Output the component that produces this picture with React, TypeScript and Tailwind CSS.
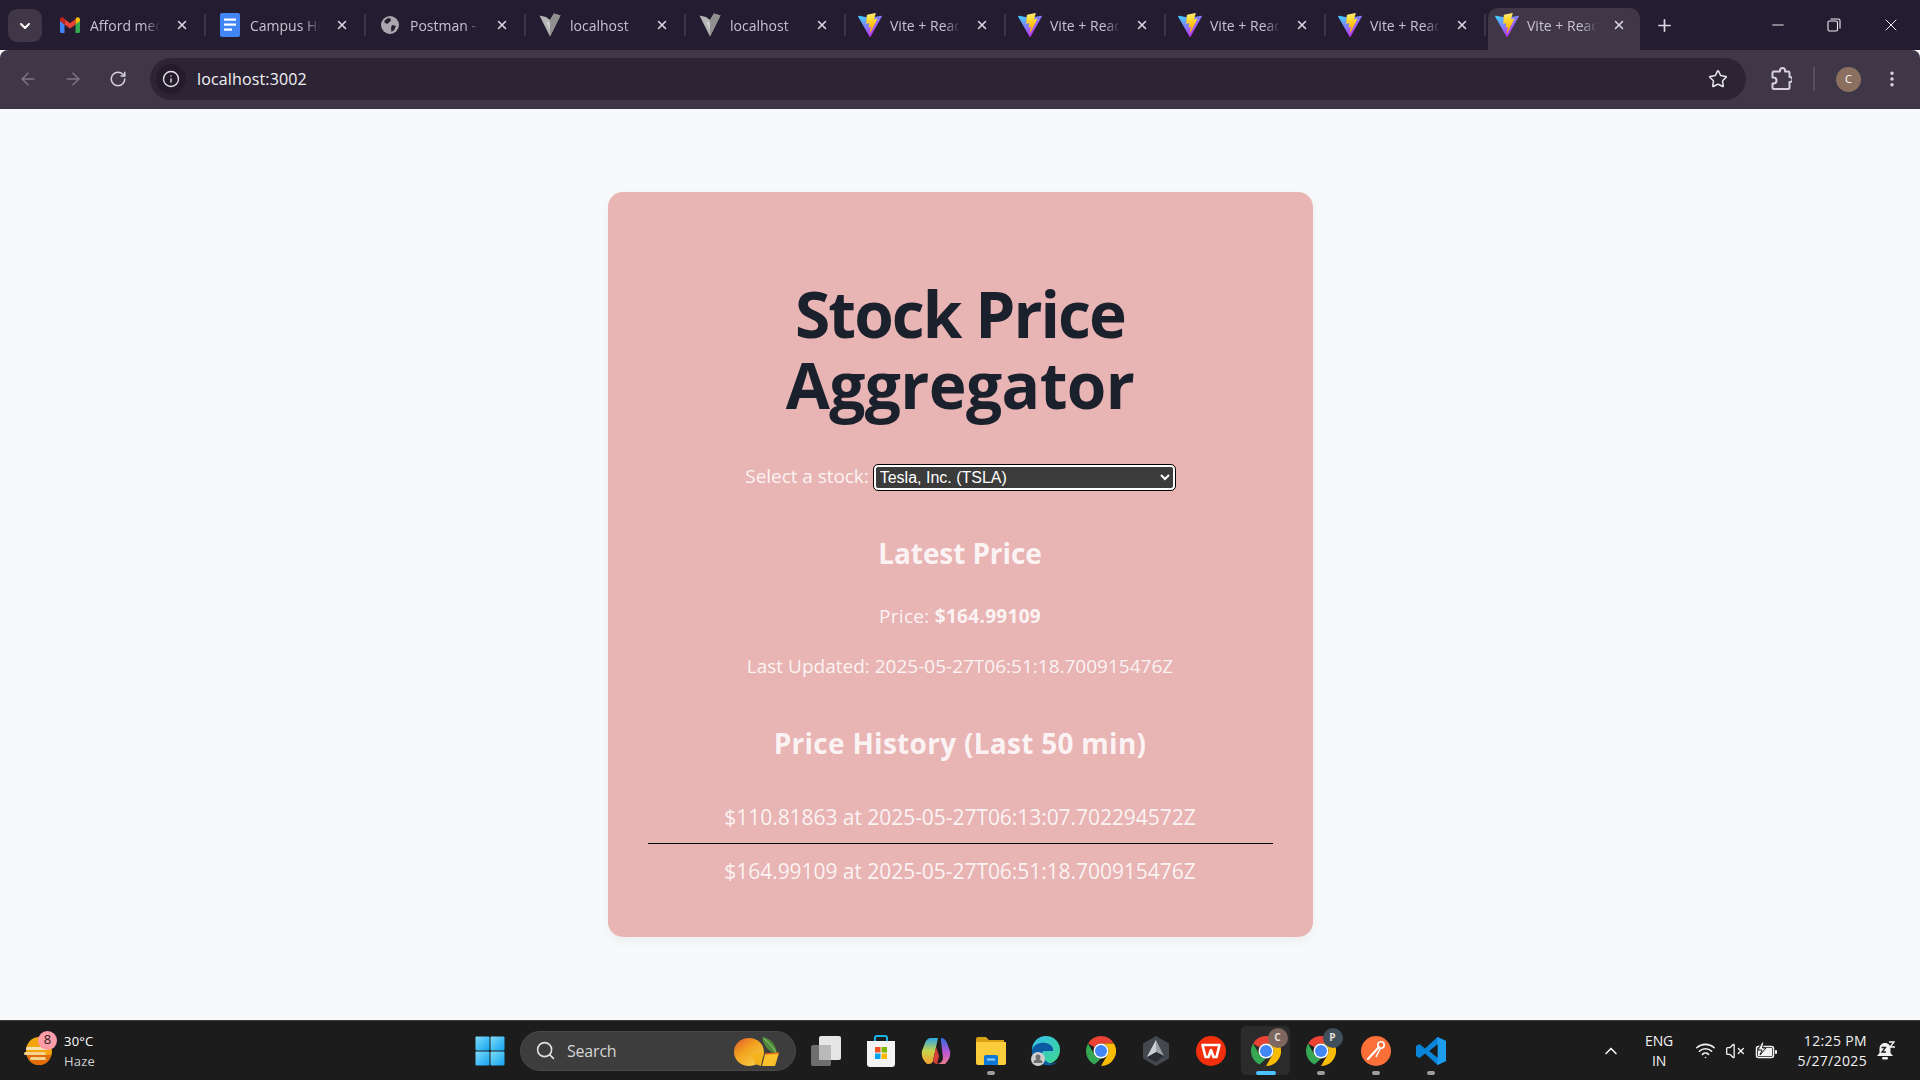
import React from "react";
import { ChevronDown, ChevronUp, X, Plus, Minus, ArrowLeft, ArrowRight, RotateCw, Info, Star, EllipsisVertical, Search, Wifi, VolumeX } from "lucide-react";

const UI = { fontFamily: '"Open Sans", "Noto Sans", sans-serif' };

function ViteIcon({ size = 24 }: { size?: number }) {
  const id = React.useId();
  return (
    <svg width={size} height={size} viewBox="0 0 256 257">
      <defs>
        <linearGradient id={id + "a"} x1="0" y1="0.1" x2="0.6" y2="0.9">
          <stop offset="0" stopColor="#41D1FF" />
          <stop offset="1" stopColor="#BD34FE" />
        </linearGradient>
        <linearGradient id={id + "b"} x1="0.4" y1="0" x2="0.5" y2="0.9">
          <stop offset="0" stopColor="#FFEA83" />
          <stop offset="0.3" stopColor="#FFDD35" />
          <stop offset="1" stopColor="#FFA800" />
        </linearGradient>
      </defs>
      <path fill={`url(#${id}a)`} d="M255.153 37.938 134.897 252.976c-2.483 4.44-8.862 4.466-11.382.048L.875 37.958c-2.746-4.814 1.371-10.646 6.827-9.67l120.385 21.517a6.537 6.537 0 0 0 2.322-.004l117.867-21.483c5.438-.991 9.574 4.796 6.877 9.62Z" />
      <path fill={`url(#${id}b)`} d="M185.432.063 96.44 17.501a3.268 3.268 0 0 0-2.634 3.014l-5.474 92.456a3.268 3.268 0 0 0 3.997 3.378l24.777-5.718c2.318-.535 4.413 1.507 3.936 3.838l-7.361 36.047c-.495 2.426 1.782 4.5 4.151 3.78l15.304-4.649c2.372-.72 4.652 1.36 4.15 3.788l-11.698 56.621c-.732 3.542 3.979 5.473 5.943 2.437l1.313-2.028 72.516-144.72c1.215-2.423-.88-5.186-3.54-4.672l-25.505 4.922c-2.396.462-4.435-1.77-3.759-4.114l16.646-57.705c.677-2.35-1.37-4.583-3.769-4.113Z" />
    </svg>
  );
}
function GrayVite() {
  return (
    <svg width="22" height="24" viewBox="0 0 22 24">
      <path d="M0.5 2.5 L7 4 L11 7 L15 0.5 L21.5 2.5 L11 23.5Z" fill="#b5b5b5" />
      <path d="M11 7 L15 0.5 L21.5 2.5 L11 23.5Z" fill="#8f8f8f" />
      <path d="M7 8 L11 10 L11 17Z" fill="#d0d0d0" />
    </svg>
  );
}
function Gmail() {
  return (
    <svg width="20" height="18" viewBox="0 0 20 16">
      <path d="M0 3v11.5A1.5 1.5 0 0 0 1.5 16H4.5V7.5z" fill="#4285f4" />
      <path d="M20 3v11.5a1.5 1.5 0 0 1-1.500 1.500H15.500V7.500z" fill="#34a853" />
      <path d="M15.500 2v5.500L20 4V2.500C20 .6 17.800-.5 16.300.700z" fill="#fbbc04" />
      <path d="M4.500 7.500V2L10 6.200 15.500 2v5.500L10 11.600z" fill="#ea4335" />
      <path d="M0 2.500V4l4.500 3.500V2L3.700.700C2.200-.5 0 .6 0 2.500z" fill="#c5221f" />
    </svg>
  );
}
function Docs() {
  return (
    <svg width="20" height="24" viewBox="0 0 20 24">
      <rect x="0" y="0" width="20" height="24" rx="2" fill="#4285f4" />
      <rect x="4" y="5.500" width="12" height="2.200" fill="#fff" />
      <rect x="4" y="10.500" width="12" height="2.200" fill="#fff" />
      <rect x="4" y="15.500" width="8" height="2.200" fill="#fff" />
    </svg>
  );
}
function Globe() {
  return (
    <svg width="18" height="18" viewBox="0 0 18 18">
      <circle cx="9" cy="9" r="9" fill="#a9a6ad" />
      <path d="M9 2 C6 2 4 4 3 6 L6 8 L8 6.500 L10 4.500 Z M11 9 L15 10 L13 14 L10.500 16 L10 12 Z" fill="#241c30" />
    </svg>
  );
}

function Tab({ icon, title, active }: { icon: React.ReactNode; title: string; active?: boolean }) {
  return (
    <div className={`relative flex items-center shrink-0 ${active ? "w-[152px] ml-[2px] h-[42px] mt-[8px] bg-[#3f3747] rounded-t-[10px] pl-[7px]" : "w-[160px] h-[50px] pl-[12px]"}`}>
      <div className={`w-[24px] h-[24px] flex items-center justify-center shrink-0 ${active ? "-mt-[8px]" : ""}`}>{icon}</div>
      <div
        className={`ml-[8px] w-[70px] whitespace-nowrap overflow-hidden text-[14px] tracking-[0px] text-[#c9c3d1] ${active ? "-mt-[8px]" : ""} [mask-image:linear-gradient(to_right,black_78%,transparent_100%)]`}
      >
        {title}
      </div>
      <div className={`ml-[13px] w-[18px] flex justify-center ${active ? "-mt-[8px]" : ""}`}>
        <X size={14} strokeWidth={2.600} color="#dcd8e2" />
      </div>
      {!active && <div className="absolute right-0 top-[14px] w-[2px] h-[22px] bg-[#3d3547]" />}
    </div>
  );
}

function TabStrip() {
  const vite = <ViteIcon size={24} />;
  const g = <GrayVite />;
  return (
    <div className="h-[50px] bg-[#241c30] flex shrink-0 relative" style={UI}>
      <div className="w-[50px] flex justify-center pt-[9px]">
        <div className="w-[34px] h-[33px] rounded-[9px] bg-[#3f3747] flex items-center justify-center">
          <ChevronDown size={16} strokeWidth={3} color="#ffffff" />
        </div>
      </div>
      <div className="-ml-[4px] flex">
        <Tab icon={<Gmail />} title="Afford medical" />
        <Tab icon={<Docs />} title="Campus Hiring" />
        <Tab icon={<Globe />} title="Postman - API" />
        <Tab icon={g} title="localhost" />
        <Tab icon={g} title="localhost" />
        <Tab icon={vite} title="Vite + React" />
        <Tab icon={vite} title="Vite + React" />
        <Tab icon={vite} title="Vite + React" />
        <Tab icon={vite} title="Vite + React" />
        <Tab icon={vite} title="Vite + React" active />
      </div>
      <div className="w-[48px] flex items-center justify-center">
        <Plus size={19} strokeWidth={2.200} color="#dcd8e2" />
      </div>
      <div className="flex-1 flex items-center justify-end">
        <div className="w-[56px] flex justify-center"><Minus size={18} strokeWidth={1.300} color="#f0eef3" /></div>
        <div className="w-[56px] flex justify-center">
          <svg width="14" height="14" viewBox="0 0 14 14" fill="none" stroke="#f0eef3" strokeWidth="1.100">
            <rect x="1" y="3" width="9.500" height="10" rx="1.500" />
            <path d="M3.500 1 H11.500 A1.500 1.500 0 0 1 13 2.500 V10.500" />
          </svg>
        </div>
        <div className="w-[58px] flex justify-center"><X size={20} strokeWidth={1.200} color="#f0eef3" /></div>
      </div>
    </div>
  );
}

function Toolbar() {
  return (
    <div className="h-[59px] pb-[1px] bg-[#3f3747] flex items-center shrink-0 rounded-t-[8px]" style={UI}>
      <div className="w-[5px]" />
      <div className="w-[45px] flex justify-center"><ArrowLeft size={20} strokeWidth={1.800} color="#7d7585" /></div>
      <div className="w-[45px] flex justify-center"><ArrowRight size={20} strokeWidth={1.800} color="#7d7585" /></div>
      <div className="w-[45px] flex justify-center"><RotateCw size={18} strokeWidth={2} color="#d5d0db" /></div>
      <div className="w-[10px]" />
      <div className="w-[1596px] h-[42px] rounded-full bg-[#2c2434] flex items-center pl-[6px] pr-[18px]">
        <div className="w-[30px] h-[30px] rounded-full bg-[#241c2c] flex items-center justify-center">
          <Info size={18} strokeWidth={1.800} color="#e6e3ea" />
        </div>
        <div className="ml-[11px] text-[16px] tracking-[0.15px] text-[#f4f2f6]">localhost:3002</div>
        <div className="flex-1" />
        <Star size={20} strokeWidth={1.800} color="#e6e3ea" />
      </div>
      <div className="w-[35px] flex justify-end ml-[11px]">
        <svg width="22" height="24" viewBox="0 0 22 24" fill="none" stroke="#d5d0db" strokeWidth="2" strokeLinejoin="round">
          <path d="M7.500 4.500 H10 V3.500 a2.500 2.500 0 0 1 5 0 V4.500 H18 a1.500 1.500 0 0 1 1.500 1.500 V10 H20 a2.500 2.500 0 0 1 0 5 h-.5 V20.500 a1.500 1.500 0 0 1 -1.500 1.500 H4 a1.500 1.500 0 0 1 -1.500 -1.500 V16.500 H3.500 a3 3 0 0 0 0 -6 H2.500 V6 A1.500 1.500 0 0 1 4 4.500 Z" />
        </svg>
      </div>
      <div className="w-[2px] h-[24px] bg-[#57505f] ml-[21px]" />
      <div className="w-[25px] h-[25px] rounded-full bg-[#8b6f5f] ml-[21px] flex items-center justify-center text-[11px] text-white">C</div>
      <div className="ml-[21px]"><EllipsisVertical size={20} strokeWidth={2.200} color="#d5d0db" /></div>
    </div>
  );
}

function Card() {
  return (
    <div className="w-[705px] bg-[#e8b4b4] rounded-[15px] shadow-[0_4px_12px_rgba(0,0,0,0.05)] px-[40px] pt-[86px] pb-[39px] text-center text-[rgba(255,255,255,0.87)]" style={UI}>
      <h1 className="text-[64px] leading-[71px] font-bold text-[#1a202c]">
        <span className="block tracking-[-1.960px]">Stock Price</span>
        <span className="block tracking-[-0.600px]">Aggregator</span>
      </h1>
      <div className="mt-[45px] h-[25px] flex items-center justify-center text-[19px] tracking-[-0.05px]">
        <label className="-mt-[2px]">Select a stock:</label>
        <select defaultValue="TSLA" className="ml-[5px] w-[301px] h-[25px] bg-[#3b3b3b] text-white text-[16px] leading-[20px] tracking-normal border-2 border-white rounded-[4px] outline outline-1 outline-black" style={{ fontFamily: '"Liberation Sans", Arial, sans-serif' }}>
          <option value="TSLA">Tesla, Inc. (TSLA)</option>
        </select>
      </div>
      <h2 className="mt-[42px] text-[28px] leading-[42px] font-bold tracking-[-0.1px]">Latest Price</h2>
      <p className="mt-[28px] text-[19px] leading-[29px] tracking-[0.3px]">Price: <strong>$164.99109</strong></p>
      <p className="mt-[21px] text-[19px] leading-[29px] tracking-[0px]">Last Updated: 2025-05-27T06:51:18.700915476Z</p>
      <h2 className="mt-[41px] text-[28px] leading-[42px] font-bold tracking-[0.28px]">Price History (Last 50 min)</h2>
      <ul className="mt-[29px] text-[21px] tracking-[-0.05px]">
        <li className="h-[51px] pt-[6px] leading-[36px] border-b border-black">$110.81863 at 2025-05-27T06:13:07.702294572Z</li>
        <li className="h-[54px] pt-[9px] leading-[36px]">$164.99109 at 2025-05-27T06:51:18.700915476Z</li>
      </ul>
    </div>
  );
}

function Chrome({ badge, bg }: { badge: string; bg: string }) {
  return (
    <div className="relative w-[30px] h-[30px]">
      <svg width="30" height="30" viewBox="0 0 30 30">
        <path d="M15 0A15 15 0 0 1 28 7.500L15 7.500A7.500 7.500 0 0 0 8.500 11.250L2 7.500A15 15 0 0 1 15 0Z" fill="#ea4335" />
        <path d="M2 7.500L8.500 18.750A7.500 7.500 0 0 0 15 22.500L8.500 28.500A15 15 0 0 1 2 7.500Z" fill="#34a853" />
        <path d="M28 7.500A15 15 0 0 1 15 30L21.500 18.750A7.500 7.500 0 0 0 15 7.500Z" fill="#fbbc04" />
        <circle cx="15" cy="15" r="7.500" fill="#fff" />
        <circle cx="15" cy="15" r="6" fill="#4285f4" />
      </svg>
      {badge && (
        <div className="absolute -top-[8px] -right-[7px] w-[20px] h-[20px] rounded-full flex items-center justify-center text-[10px] font-bold text-[#e8e0dc]" style={{ backgroundColor: bg }}>{badge}</div>
      )}
    </div>
  );
}

function Slot({ children, dot, active }: { children: React.ReactNode; dot?: boolean; active?: boolean }) {
  return (
    <div className="relative w-[55px] h-[60px] flex items-center justify-center shrink-0">
      {active && <div className="absolute left-[3px] top-[5px] w-[49px] h-[49px] rounded-[5px] bg-[#2b2b2b]" />}
      <div className="relative">{children}</div>
      {dot && <div className={`absolute left-1/2 -translate-x-1/2 top-[50px] h-[4px] rounded-full ${active ? "w-[20px] bg-[#4cc2ff]" : "w-[8px] bg-[#9d9d9d]"}`} />}
    </div>
  );
}

function Taskbar() {
  return (
    <div className="h-[60px] bg-[#1c1c1c] border-t border-[#3a3a3a] flex items-center shrink-0 text-white" style={UI}>
      <div className="w-[468px] flex items-center pl-[24px] shrink-0">
        <div className="relative w-[30px] h-[30px]">
          <svg width="30" height="30" viewBox="0 0 30 30">
            <ellipse cx="15" cy="15" rx="13" ry="14" fill="#f5a50c" />
            <path d="M3 19h24c-1 6-6 10-12 10S4 25 3 19z" fill="#e26b0a" />
            <rect x="2" y="11" width="22" height="3" rx="1.500" fill="#f7e3b0" />
            <rect x="0" y="16" width="22" height="3" rx="1.500" fill="#f4d28f" />
            <rect x="6" y="21" width="16" height="3" rx="1.500" fill="#f4d28f" />
          </svg>
          <div className="absolute -top-[5px] left-[14px] w-[19px] h-[19px] rounded-full bg-[#ff9ca8] flex items-center justify-center text-[13px] text-[#1c1c1c]">8</div>
        </div>
        <div className="ml-[10px] text-[13px] leading-[20px] tracking-[0.2px]">
          <div>30°C</div>
          <div className="text-[#d0d0d0]">Haze</div>
        </div>
      </div>
      <div className="w-[44px] flex justify-center shrink-0">
        <svg width="30" height="30" viewBox="0 0 30 30">
          <defs>
            <linearGradient id="winb" x1="0" y1="0" x2="1" y2="1">
              <stop offset="0" stopColor="#7fdcf9" />
              <stop offset="1" stopColor="#12a3ef" />
            </linearGradient>
          </defs>
          <rect x="0.500" y="0.500" width="14" height="14" rx="1" fill="url(#winb)" />
          <rect x="15.500" y="0.500" width="14" height="14" rx="1" fill="url(#winb)" />
          <rect x="0.500" y="15.500" width="14" height="14" rx="1" fill="url(#winb)" />
          <rect x="15.500" y="15.500" width="14" height="14" rx="1" fill="url(#winb)" />
        </svg>
      </div>
      <div className="ml-[8px] w-[276px] h-[40px] rounded-full bg-[#3d3d3d] border border-[#484848] flex items-center pl-[14px] pr-[14px] shrink-0">
        <Search size={21} strokeWidth={1.800} color="#e0e0e0" />
        <div className="ml-[11px] text-[16px] tracking-[-0.2px] text-[#d6d6d6]">Search</div>
        <div className="flex-1" />
        <svg width="48" height="32" viewBox="0 0 48 32">
          <defs>
            <linearGradient id="mango" x1="0" y1="0" x2="0.8" y2="1">
              <stop offset="0" stopColor="#e4572e" />
              <stop offset="0.45" stopColor="#f2a21e" />
              <stop offset="1" stopColor="#f7d04a" />
            </linearGradient>
          </defs>
          <path d="M29 2 C38 3 43 9 44 19 C37 18 31 12 29 2Z" fill="#4d8a3a" />
          <path d="M31 4 C36 8 40 12 44 19" stroke="#a6cf87" strokeWidth="1" fill="none" />
          <ellipse cx="16" cy="17" rx="15" ry="14" fill="url(#mango)" />
          <path d="M19 20 L31 17 L28 31 L22 29Z" fill="#f6b21a" />
          <path d="M32 19 L46 18 L42 31 L29 31Z" fill="#f9c12a" />
          <path d="M32 19 L46 18" stroke="#e36a16" strokeWidth="1.500" />
        </svg>
      </div>
      <div className="flex ml-[2px] shrink-0">
        <Slot>
          <svg width="30" height="30" viewBox="0 0 30 30">
            <rect x="0" y="9" width="20" height="21" rx="2" fill="#6e6e6e" />
            <rect x="8" y="0" width="22" height="24" rx="2" fill="#e6e6e6" />
            <rect x="8" y="9" width="12" height="15" fill="#b9b9b9" />
          </svg>
        </Slot>
        <Slot>
          <svg width="30" height="32" viewBox="0 0 30 32">
            <path d="M9 6V3a2 2 0 0 1 2-2h8a2 2 0 0 1 2 2v3" fill="none" stroke="#19b3e6" strokeWidth="2" />
            <path d="M1 6h28v23a3 3 0 0 1-3 3H4a3 3 0 0 1-3-3z" fill="#f4f4f4" />
            <rect x="9" y="12" width="5.500" height="5.500" fill="#f25022" />
            <rect x="15.500" y="12" width="5.500" height="5.500" fill="#7fba00" />
            <rect x="9" y="18.500" width="5.500" height="5.500" fill="#00a4ef" />
            <rect x="15.500" y="18.500" width="5.500" height="5.500" fill="#ffb900" />
          </svg>
        </Slot>
        <Slot>
          <svg width="30" height="30" viewBox="0 0 30 30">
            <defs>
              <linearGradient id="cp1" x1="0" y1="0" x2="0" y2="1">
                <stop offset="0" stopColor="#2aa7e6" />
                <stop offset="0.500" stopColor="#c8d44a" />
                <stop offset="1" stopColor="#f0a030" />
              </linearGradient>
              <linearGradient id="cp2" x1="0" y1="0" x2="0" y2="1">
                <stop offset="0" stopColor="#2b6fe0" />
                <stop offset="0.500" stopColor="#b455d8" />
                <stop offset="1" stopColor="#f07a90" />
              </linearGradient>
            </defs>
            <path d="M10 2h7l-5 23c-.500 2-2 3-4 3H6C2 24 0 20 1 15L4 7c1-3 3-5 6-5z" fill="url(#cp1)" />
            <path d="M20 2c3 0 5 2 6 5l3 8c1 5-1 9-5 13h-7c3-1 5-3 5-6L20 5z" fill="url(#cp2)" />
            <path d="M12 25c5 4 9 3 12 3h-8c-2 0-3-1-4-3z" fill="#e8483a" />
            <path d="M15 11l-3 14 4 3 2-8z" fill="#d8403a" />
          </svg>
        </Slot>
        <Slot dot>
          <svg width="30" height="28" viewBox="0 0 30 28">
            <path d="M0 2a2 2 0 0 1 2-2h8l3 3h15v5H0z" fill="#d9a214" />
            <path d="M0 5h30v21a2 2 0 0 1-2 2H2a2 2 0 0 1-2-2z" fill="#fbcd3c" />
            <path d="M8 20a2 2 0 0 1 2-2h10a2 2 0 0 1 2 2v8H8z" fill="#0f78d4" />
            <rect x="11" y="21.500" width="8" height="2" fill="#8ed0f8" />
          </svg>
        </Slot>
        <Slot>
          <svg width="30" height="30" viewBox="0 0 30 30">
            <defs>
              <linearGradient id="edg" x1="0" y1="0" x2="1" y2="1">
                <stop offset="0" stopColor="#35c1f1" />
                <stop offset="1" stopColor="#3dd68c" />
              </linearGradient>
            </defs>
            <circle cx="15" cy="14" r="14" fill="url(#edg)" />
            <path d="M1 14C3 8 9 6 15 7c5 1 8 5 7 8h-9c-4 0-2 9 5 12 4 1 7 0 10-3-4 5-9 6-13 5C7 28 0 22 1 14Z" fill="#0c59a4" />
            <circle cx="7" cy="23" r="7" fill="#cfcfcf" />
            <circle cx="7" cy="21" r="2.500" fill="#6d6d6d" />
            <path d="M2.500 27a4.500 4 0 0 1 9 0z" fill="#6d6d6d" />
          </svg>
        </Slot>
        <Slot><Chrome badge="" bg="" /></Slot>
        <Slot>
          <svg width="26" height="30" viewBox="0 0 26 30">
            <path d="M13 0L26 7.500V22.500L13 30L0 22.500V7.500Z" fill="#43474e" />
            <path d="M13 4L21 20L13 16L4 21Z" fill="#9aa0a8" />
            <path d="M13 16L21 20L13 26L4 21Z" fill="#2a2d33" />
            <path d="M13 4L13 16L4 21Z" fill="#c9ced4" />
          </svg>
        </Slot>
        <Slot>
          <svg width="30" height="30" viewBox="0 0 30 30">
            <circle cx="15" cy="15" r="15" fill="#f12f0c" />
            <path d="M6.500 9H23.500L20.500 21H17.500L15 14L12.500 21H9.500Z" fill="none" stroke="#fff" strokeWidth="2.600" strokeLinejoin="round" />
          </svg>
        </Slot>
        <Slot dot active><Chrome badge="C" bg="#7d675f" /></Slot>
        <Slot dot><Chrome badge="P" bg="#3f4f5c" /></Slot>
        <Slot dot>
          <svg width="30" height="30" viewBox="0 0 30 30">
            <circle cx="15" cy="15" r="15" fill="#fb6f38" />
            <path d="M7 23 L18 11" stroke="#fff" strokeWidth="2.200" strokeLinecap="round" />
            <circle cx="20" cy="9" r="3.200" fill="none" stroke="#fff" strokeWidth="1.600" />
            <path d="M19 13 L15 21" stroke="#fff" strokeWidth="1.600" />
          </svg>
        </Slot>
        <Slot dot>
          <svg width="30" height="30" viewBox="0 0 30 30">
            <path d="M21.500 1L30 5v20l-8.500 4L9 17.500 3.500 22 0 20V10l3.500-2L9 12.500ZM21.500 8.500L13.500 15l8 6.500Z" fill="#0a84d8" />
            <path d="M21.500 1L30 5v20l-8.500 4Z" fill="#20a4f3" fillOpacity="0.800" />
            <path d="M21.500 8.500L13.500 15l8 6.500Z" fill="#1c1c1c" />
          </svg>
        </Slot>
      </div>
      <div className="flex-1 flex items-center justify-end text-[#f2f2f2]">
        <ChevronUp size={20} strokeWidth={2} className="mr-[16px]" />
        <div className="w-[44px] text-center text-[14px] leading-[20px] tracking-[-0.2px]">ENG<br />IN</div>
        <Wifi size={21} strokeWidth={1.800} className="ml-[14px]" />
        <div className="ml-[9px] flex items-center">
          <VolumeX size={20} strokeWidth={1.600} />
        </div>
        <svg width="22" height="18" viewBox="0 0 22 18" className="ml-[10px]">
          <rect x="1.500" y="4.500" width="17" height="11" rx="2" fill="none" stroke="#f2f2f2" strokeWidth="1.500" />
          <rect x="3" y="6" width="14" height="8" fill="#f2f2f2" />
          <rect x="20" y="8" width="2" height="4" rx="1" fill="#f2f2f2" />
          <path d="M7 0 L3 8 H7 L5 13 L11 6 H7.500 L9 0Z" fill="#f2f2f2" stroke="#1c1c1c" />
        </svg>
        <div className="ml-[10px] w-[80px] text-right text-[14px] leading-[20px] tracking-[0.35px]">
          <div>12:25 PM</div>
          <div>5/27/2025</div>
        </div>
        <div className="ml-[9px] mr-[25px]">
          <svg width="19" height="20" viewBox="0 0 19 20">
            <path d="M9 2C5.500 2 3.500 4.500 3.500 8v4L1 15h16l-2.500-3V8C14.500 4.500 12.500 2 9 2Z" fill="#f2f2f2" />
            <rect x="6" y="16" width="6" height="2.500" rx="1.200" fill="#f2f2f2" />
            <path d="M5.500 6.500h4L6 11h4" fill="none" stroke="#1c1c1c" strokeWidth="1.300" />
            <path d="M13 1h5l-4 5h5" fill="none" stroke="#f2f2f2" strokeWidth="1.400" />
          </svg>
        </div>
      </div>
    </div>
  );
}

export default function App() {
  return (
    <div className="w-[1920px] h-[1080px] flex flex-col overflow-hidden bg-[#f8f9fa]">
      <TabStrip />
      <Toolbar />
      <main className="flex-1 flex items-center justify-center">
        <Card />
      </main>
      <Taskbar />
    </div>
  );
}
